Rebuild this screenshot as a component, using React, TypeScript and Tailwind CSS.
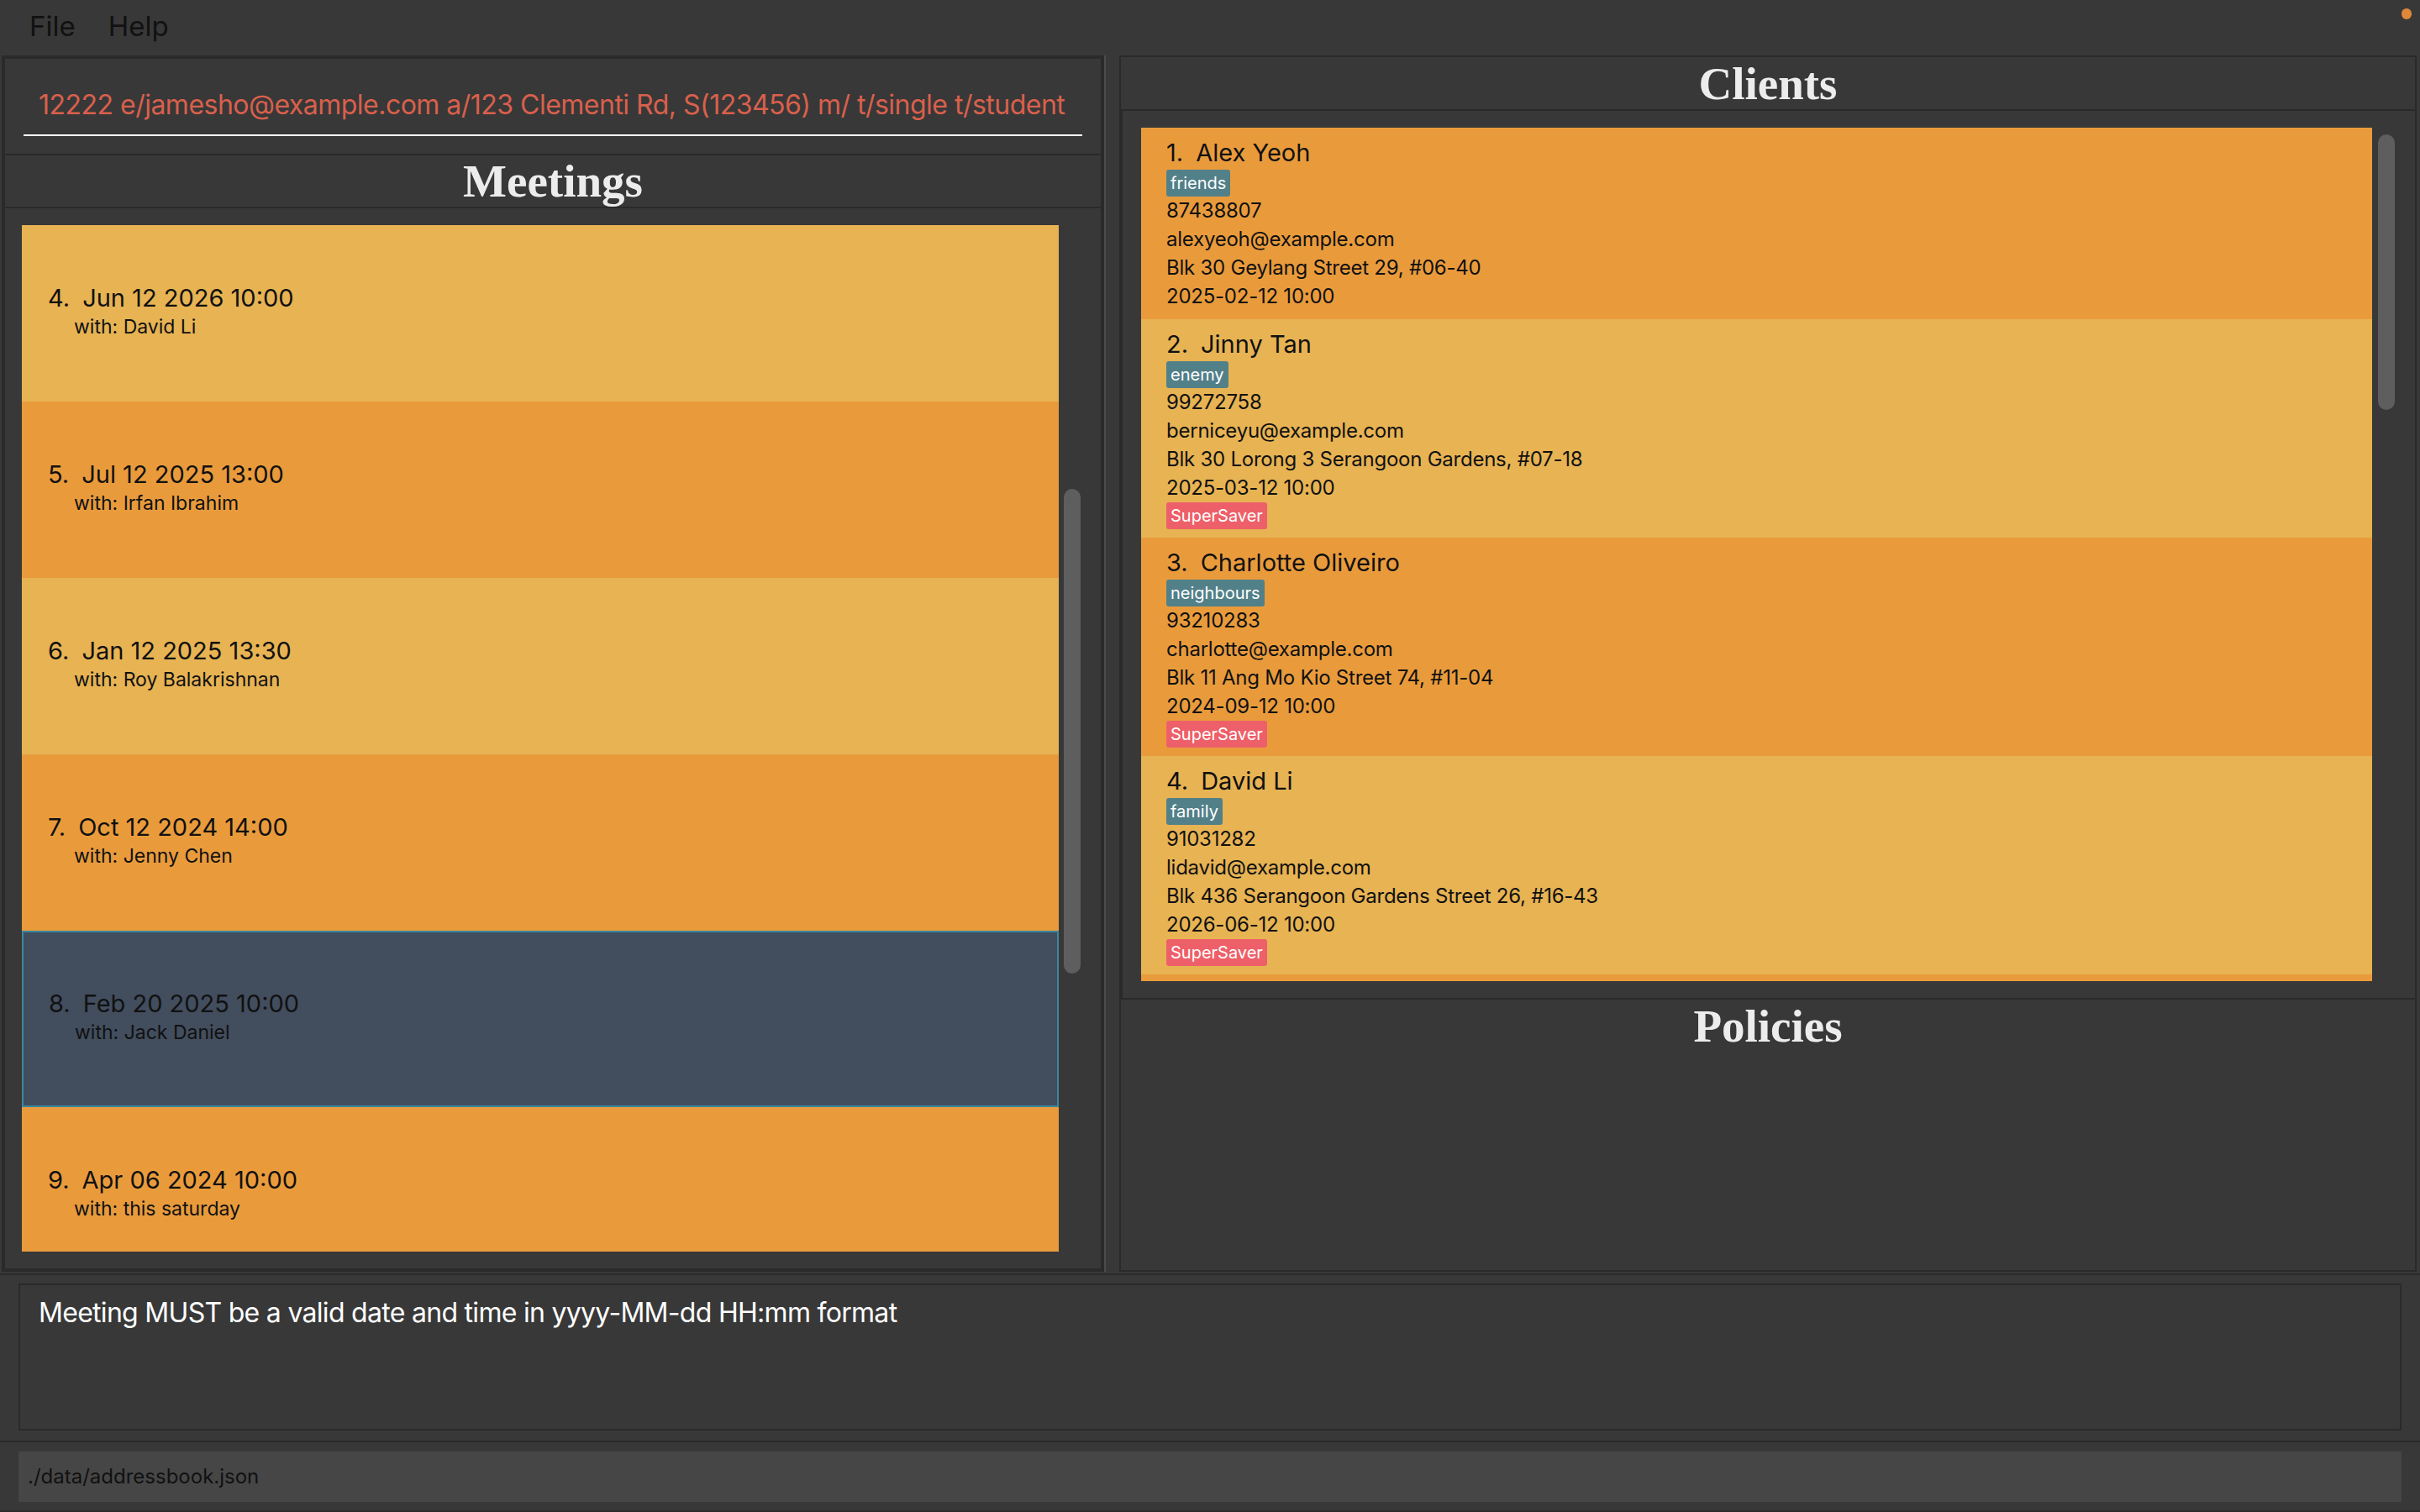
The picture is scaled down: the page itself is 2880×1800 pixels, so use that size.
import React from "react";

const SANS = "font-['Inter','Liberation_Sans',sans-serif]";

type Meeting = { id: number; when: string; who: string; selected?: boolean };
const meetings: Meeting[] = [
  { id: 4, when: "Jun 12 2026 10:00", who: "David Li" },
  { id: 5, when: "Jul 12 2025 13:00", who: "Irfan Ibrahim" },
  { id: 6, when: "Jan 12 2025 13:30", who: "Roy Balakrishnan" },
  { id: 7, when: "Oct 12 2024 14:00", who: "Jenny Chen" },
  { id: 8, when: "Feb 20 2025 10:00", who: "Jack Daniel", selected: true },
  { id: 9, when: "Apr 06 2024 10:00", who: "this saturday" },
];

type Client = {
  id: number;
  name: string;
  tag: string;
  phone: string;
  email: string;
  address: string;
  date: string;
  policy?: string;
};
const clients: Client[] = [
  { id: 1, name: "Alex Yeoh", tag: "friends", phone: "87438807", email: "alexyeoh@example.com", address: "Blk 30 Geylang Street 29, #06-40", date: "2025-02-12 10:00" },
  { id: 2, name: "Jinny Tan", tag: "enemy", phone: "99272758", email: "berniceyu@example.com", address: "Blk 30 Lorong 3 Serangoon Gardens, #07-18", date: "2025-03-12 10:00", policy: "SuperSaver" },
  { id: 3, name: "Charlotte Oliveiro", tag: "neighbours", phone: "93210283", email: "charlotte@example.com", address: "Blk 11 Ang Mo Kio Street 74, #11-04", date: "2024-09-12 10:00", policy: "SuperSaver" },
  { id: 4, name: "David Li", tag: "family", phone: "91031282", email: "lidavid@example.com", address: "Blk 436 Serangoon Gardens Street 26, #16-43", date: "2026-06-12 10:00", policy: "SuperSaver" },
];

function Header({ title, h }: { title: string; h: string }) {
  return (
    <div className={`${h} flex items-center justify-center shrink-0`}>
      <span className="font-['Liberation_Serif','Times_New_Roman',serif] font-bold text-[55px] leading-none text-[#ececec]">
        {title}
      </span>
    </div>
  );
}

function MeetingCard({ m }: { m: Meeting }) {
  const bg = m.selected
    ? "bg-[#424d5e] border-2 border-[#3a87a0]"
    : m.id % 2 === 1
    ? "bg-[#e99b3c]"
    : "bg-[#e7b353]";
  return (
    <div className={`h-[210px] shrink-0 ${bg} ${m.selected ? "pl-[30px] pt-[68px]" : "pl-[31px] pt-[70px]"} text-[#111]`}>
      <div className="h-[34px] flex items-center text-[29px]">
        <span>{m.id}.</span>
        <span className="ml-[15px]">{m.when}</span>
      </div>
      <div className="h-[34px] flex items-center pl-[31px] text-[23px]">with: {m.who}</div>
    </div>
  );
}

function Tag({ text, color }: { text: string; color: string }) {
  return (
    <div className="h-[32px] flex items-center">
      <span className={`${color} text-white text-[20px] h-[32px] leading-[32px] px-[5px] rounded-[3px]`}>{text}</span>
    </div>
  );
}

function ClientCard({ c }: { c: Client }) {
  const bg = c.id % 2 === 1 ? "bg-[#e99b3c]" : "bg-[#e7b353]";
  return (
    <div className={`${bg} shrink-0 px-[30px] py-[10px] text-[#111]`}>
      <div className="h-[40px] flex items-center text-[29px]">
        <span>{c.id}.</span>
        <span className="ml-[15px]">{c.name}</span>
      </div>
      <Tag text={c.tag} color="bg-[#528089]" />
      <div className="h-[34px] leading-[34px] text-[24px] tracking-[-0.01em]">{c.phone}</div>
      <div className="h-[34px] leading-[34px] text-[24px] tracking-[-0.01em]">{c.email}</div>
      <div className="h-[34px] leading-[34px] text-[24px] tracking-[-0.01em]">{c.address}</div>
      <div className="h-[34px] leading-[34px] text-[24px] tracking-[-0.01em]">{c.date}</div>
      {c.policy && <Tag text={c.policy} color="bg-[#ee6069]" />}
    </div>
  );
}

export default function App() {
  return (
    <div className={`w-[2880px] h-[1800px] bg-[#383838] flex flex-col overflow-hidden relative ${SANS}`}>
      {/* menu bar */}
      <div className="h-[66px] shrink-0 flex items-center pl-[35px] pb-[2px] gap-[39px] text-[33px] text-[#111]">
        <span>File</span>
        <span>Help</span>
      </div>
      <div className="absolute right-[10px] top-[10px] w-[12px] h-[13px] rounded-full bg-[#e0883a]" />

      {/* main split */}
      <div className="h-[1450px] shrink-0 flex items-start">
        {/* left panel */}
        <div className="ml-[2px] w-[1312px] h-[1448px] border-4 border-[#2a2a2a] flex flex-col">
          <div className="h-[113px] shrink-0 pt-[36px] px-[22px]">
            <div className="h-[38px] pl-[18px] flex items-center text-[32px] tracking-[-0.016em] text-[#d9604c] whitespace-nowrap overflow-hidden">
              12222 e/jamesho@example.com a/123 Clementi Rd, S(123456) m/ t/single t/student
            </div>
            <div className="mt-[16px] h-[2px] bg-white" />
          </div>
          <div className="h-[2px] shrink-0 bg-[#2a2a2a]" />
          <Header title="Meetings" h="h-[61px]" />
          <div className="h-[2px] shrink-0 bg-[#2a2a2a]" />
          <div className="h-[1262px] shrink-0 flex pl-[20px] pr-[24px] py-[20px] gap-[6px]">
            <div className="flex-1 flex flex-col overflow-hidden">
              {meetings.map((m) => (
                <MeetingCard key={m.id} m={m} />
              ))}
            </div>
            <div className="w-[20px] shrink-0 pt-[314px]">
              <div className="h-[577px] rounded-full bg-[#5e5e5e]" />
            </div>
          </div>
        </div>

        {/* splitter */}
        <div className="w-[2px] h-[1448px] bg-[#4b4b4b]" />

        {/* right panel */}
        <div className="ml-[16px] w-[1544px] h-[1448px] border-2 border-[#2a2a2a] flex flex-col">
          <Header title="Clients" h="h-[62px]" />
          <div className="h-[2px] shrink-0 bg-[#2a2a2a]" />
          <div className="h-[1056px] shrink-0 flex pl-[22px] pr-[24px] py-[20px] gap-[7px] border-l-2 border-[#2a2a2a]">
            <div className="flex-1 flex flex-col overflow-hidden">
              {clients.map((c) => (
                <ClientCard key={c.id} c={c} />
              ))}
              <div className="h-[8px] shrink-0 bg-[#e99b3c]" />
            </div>
            <div className="w-[20px] shrink-0 pt-[8px]">
              <div className="h-[328px] rounded-full bg-[#5e5e5e]" />
            </div>
          </div>
          <div className="h-[2px] shrink-0 bg-[#2a2a2a]" />
          <div className="flex-1 flex flex-col">
            <Header title="Policies" h="h-[62px]" />
          </div>
        </div>
      </div>

      {/* result display */}
      <div className="h-[201px] shrink-0 border-y-2 border-[#2a2a2a] pt-[10px] px-[22px]">
        <div className="h-[175px] border-2 border-[#2a2a2a] pl-[22px] pt-[14px]">
          <div className="h-[38px] flex items-center text-[32px] tracking-[-0.022em] text-white">
            Meeting MUST be a valid date and time in yyyy-MM-dd HH:mm format
          </div>
        </div>
      </div>

      {/* status bar */}
      <div className="h-[83px] shrink-0 pt-[11px] px-[22px] border-b-2 border-[#2a2a2a]">
        <div className="h-[60px] bg-[#464646] pl-[11px] flex items-center text-[24px] text-[#111]">
          ./data/addressbook.json
        </div>
      </div>
    </div>
  );
}
